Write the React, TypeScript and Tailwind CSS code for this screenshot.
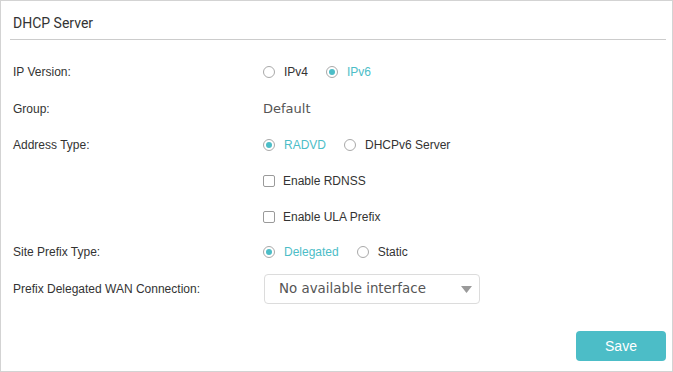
import { useState } from "react";

const teal = "text-[#4cbdc7]";

function Radio({ label, checked, onClick }: { label: string; checked: boolean; onClick: () => void }) {
  return (
    <button type="button" onClick={onClick} className="flex items-center mr-[18px]">
      <span className="w-[12px] h-[12px] rounded-full border border-[#a9a9a9] bg-white flex items-center justify-center">
        {checked && <span className="w-[6px] h-[6px] rounded-full bg-[#4cbdc7]" />}
      </span>
      <span className={`ml-[9px] text-[12px] ${checked ? teal : "text-[#333]"}`}>{label}</span>
    </button>
  );
}

function Checkbox({ label }: { label: string }) {
  const [on, setOn] = useState(false);
  return (
    <button type="button" onClick={() => setOn(!on)} className="flex items-center">
      <span className="w-[12px] h-[12px] rounded-[2px] border border-[#9a9a9a] bg-white" />
      <span className="ml-[8px] text-[12px] text-[#333]">{label}</span>
    </button>
  );
}

function Row({ label, children, className = "h-[36px]" }: { label?: string; children: React.ReactNode; className?: string }) {
  return (
    <div className={`flex items-center ${className}`}>
      <div className="w-[250px] text-[12px] text-[#333]">{label}</div>
      <div className="flex items-center">{children}</div>
    </div>
  );
}

export default function App() {
  const [ipVer, setIpVer] = useState("v6");
  const [addr, setAddr] = useState("radvd");
  const [prefix, setPrefix] = useState("delegated");

  return (
    <div
      className="w-[673px] h-[372px] bg-white border border-[#d3d3d3] flex flex-col"
      style={{ fontFamily: '"Liberation Sans", Arial, sans-serif' }}
    >
      {/* Header */}
      <div className="pl-[12px] pt-[12px] h-[27px] text-[14px] leading-[20px] text-[#333]" style={{ fontFamily: "Roboto, sans-serif" }}>
        DHCP Server
      </div>
      <div className="ml-[9px] mr-[6px] mt-[11px] border-t border-[#cccccc]" />

      {/* Form */}
      <div className="pl-[12px] mt-[14px] flex flex-col">
        <Row label="IP Version:">
          <Radio label="IPv4" checked={ipVer === "v4"} onClick={() => setIpVer("v4")} />
          <Radio label="IPv6" checked={ipVer === "v6"} onClick={() => setIpVer("v6")} />
        </Row>
        <Row label="Group:" className="h-[37px]">
          <span className="text-[13px] text-[#555]" style={{ fontFamily: '"DejaVu Sans", Verdana, sans-serif' }}>
            Default
          </span>
        </Row>
        <Row label="Address Type:">
          <Radio label="RADVD" checked={addr === "radvd"} onClick={() => setAddr("radvd")} />
          <Radio label="DHCPv6 Server" checked={addr === "dhcp"} onClick={() => setAddr("dhcp")} />
        </Row>
        <Row>
          <Checkbox label="Enable RDNSS" />
        </Row>
        <Row className="h-[35px]">
          <Checkbox label="Enable ULA Prefix" />
        </Row>
        <Row label="Site Prefix Type:">
          <Radio label="Delegated" checked={prefix === "delegated"} onClick={() => setPrefix("delegated")} />
          <Radio label="Static" checked={prefix === "static"} onClick={() => setPrefix("static")} />
        </Row>
        <Row label="Prefix Delegated WAN Connection:" className="h-[38px]">
          <div className="ml-[1px] w-[216px] h-[30px] rounded-[4px] border border-[#dcdcdc] flex items-center justify-between pl-[14px] pr-[7px]">
            <span className="text-[13.4px] text-[#555]" style={{ fontFamily: '"DejaVu Sans", Verdana, sans-serif' }}>
              No available interface
            </span>
            <svg width="11" height="7" viewBox="0 0 11 7">
              <path d="M0 0 H11 L5.5 7 Z" fill="#9a9a9a" />
            </svg>
          </div>
        </Row>
      </div>

      <div className="flex justify-end mr-[6px] mt-[23px]">
        <button type="button" className="w-[90px] h-[30px] rounded-[4px] bg-[#4cbdc7] text-white text-[14px]">
          Save
        </button>
      </div>
    </div>
  );
}
